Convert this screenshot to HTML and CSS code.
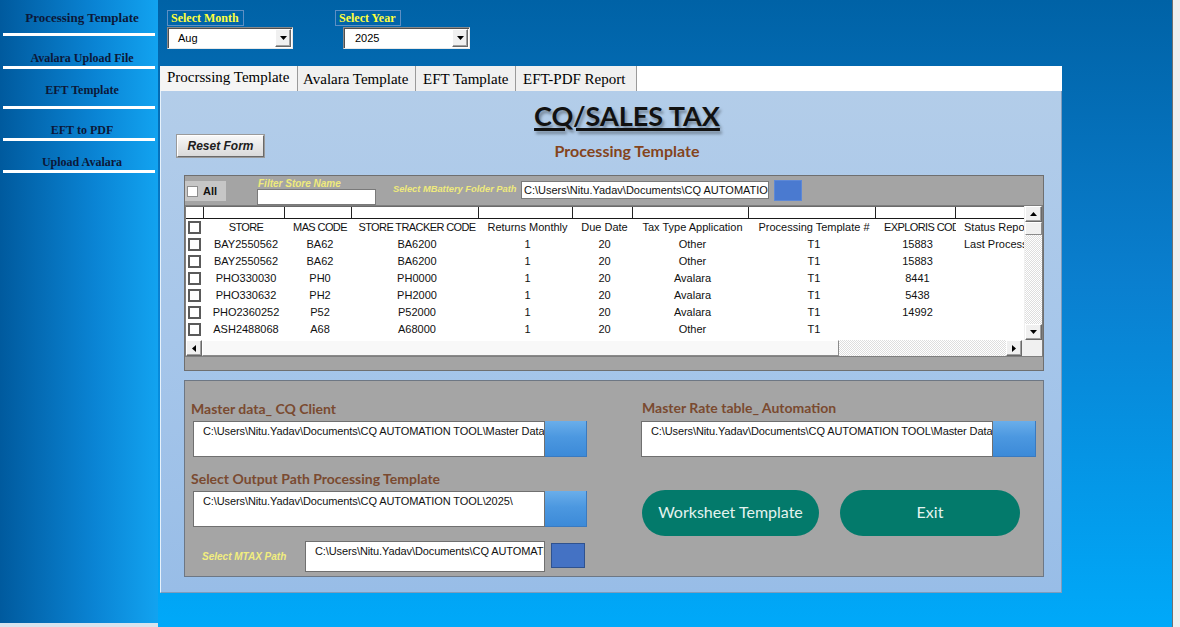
FILE: index.html
```html
<!DOCTYPE html>
<html lang="en">
<head>
<meta charset="utf-8">
<title>CQ/SALES TAX</title>
<link rel="stylesheet" href="styles.css">
</head>
<body>
<div class="app">
  <nav class="sidebar">
    <div class="nav-item nav-item-1">Processing Template</div>
    <div class="nav-item nav-item-2">Avalara Upload File</div>
    <div class="nav-item nav-item-3">EFT Template</div>
    <div class="nav-item nav-item-4">EFT to PDF</div>
    <div class="nav-item nav-item-5">Upload Avalara</div>
  </nav>
  <main class="main">
    <div class="topbar">
      <div class="picker picker-month">
        <div class="picker-label">Select Month</div>
        <div class="combo"><span class="combo-value">Aug</span><span class="combo-btn"><svg width="7" height="4" viewBox="0 0 7 4"><path d="M0 0h7L3.5 4z" fill="#000"/></svg></span></div>
      </div>
      <div class="picker picker-year">
        <div class="picker-label">Select Year</div>
        <div class="combo"><span class="combo-value">2025</span><span class="combo-btn"><svg width="7" height="4" viewBox="0 0 7 4"><path d="M0 0h7L3.5 4z" fill="#000"/></svg></span></div>
      </div>
    </div>
    <div class="tabs">
      <div class="tab tab-1 tab-active">Procrssing Template</div>
      <div class="tab tab-2">Avalara Template</div>
      <div class="tab tab-3">EFT Tamplate</div>
      <div class="tab tab-4">EFT-PDF Report</div>
    </div>
    <section class="panel">
      <header class="panel-head">
        <div class="reset-btn">Reset Form</div>
        <div class="title-block">
          <h1 class="title">CQ/SALES TAX</h1>
          <div class="subtitle">Processing Template</div>
        </div>
      </header>
      <div class="grid-panel">
        <div class="toolbar">
          <div class="all-box"><span class="chk-light"></span><span class="all-text">All</span></div>
          <div class="filter">
            <div class="ylabel filter-label">Filter Store Name</div>
            <div class="input-filter"></div>
          </div>
          <div class="ylabel mb-label">Select MBattery Folder Path</div>
          <div class="input-path">C:\Users\Nitu.Yadav\Documents\CQ AUTOMATION TOOL\</div>
          <div class="blue-btn"></div>
        </div>
        <div class="listview">
          <div class="lv-content">
            <div class="lv-head"><span></span><span></span><span></span><span></span><span></span><span></span><span></span><span></span><span></span><span class="last"></span></div>
            <div class="lv-row"><span class="c-chk"><i class="chk"></i></span><span class="caps">STORE</span><span class="caps">MAS CODE</span><span class="caps">STORE TRACKER CODE</span><span>Returns Monthly</span><span>Due Date</span><span>Tax Type Application</span><span>Processing Template #</span><span class="c-left caps">EXPLORIS CODE</span><span class="c-left">Status Report</span></div>
            <div class="lv-row"><span class="c-chk"><i class="chk"></i></span><span>BAY2550562</span><span>BA62</span><span>BA6200</span><span>1</span><span>20</span><span>Other</span><span>T1</span><span>15883</span><span class="c-left">Last Process</span></div>
            <div class="lv-row"><span class="c-chk"><i class="chk"></i></span><span>BAY2550562</span><span>BA62</span><span>BA6200</span><span>1</span><span>20</span><span>Other</span><span>T1</span><span>15883</span><span class="c-left"></span></div>
            <div class="lv-row"><span class="c-chk"><i class="chk"></i></span><span>PHO330030</span><span>PH0</span><span>PH0000</span><span>1</span><span>20</span><span>Avalara</span><span>T1</span><span>8441</span><span class="c-left"></span></div>
            <div class="lv-row"><span class="c-chk"><i class="chk"></i></span><span>PHO330632</span><span>PH2</span><span>PH2000</span><span>1</span><span>20</span><span>Avalara</span><span>T1</span><span>5438</span><span class="c-left"></span></div>
            <div class="lv-row"><span class="c-chk"><i class="chk"></i></span><span>PHO2360252</span><span>P52</span><span>P52000</span><span>1</span><span>20</span><span>Avalara</span><span>T1</span><span>14992</span><span class="c-left"></span></div>
            <div class="lv-row"><span class="c-chk"><i class="chk"></i></span><span>ASH2488068</span><span>A68</span><span>A68000</span><span>1</span><span>20</span><span>Other</span><span>T1</span><span></span><span class="c-left"></span></div>
          </div>
          <div class="vscroll">
            <div class="sb-btn"><svg width="7" height="4" viewBox="0 0 7 4"><path d="M0 4h7L3.5 0z" fill="#000"/></svg></div>
            <div class="sb-thumb-v"></div>
            <div class="sb-track"></div>
            <div class="sb-btn"><svg width="7" height="4" viewBox="0 0 7 4"><path d="M0 0h7L3.5 4z" fill="#000"/></svg></div>
          </div>
          <div class="hscroll">
            <div class="sb-btn"><svg width="4" height="7" viewBox="0 0 4 7"><path d="M4 0v7L0 3.5z" fill="#000"/></svg></div>
            <div class="sb-thumb-h"></div>
            <div class="sb-track"></div>
            <div class="sb-btn"><svg width="4" height="7" viewBox="0 0 4 7"><path d="M0 0v7L4 3.5z" fill="#000"/></svg></div>
          </div>
          <div class="corner"></div>
        </div>
      </div>
      <div class="lower-panel">
        <div class="col col-left">
          <div class="blabel">Master data_ CQ Client</div>
          <div class="path-row">
            <div class="pathbox">C:\Users\Nitu.Yadav\Documents\CQ AUTOMATION TOOL\Master Data\</div>
            <div class="browse-btn"></div>
          </div>
          <div class="blabel blabel-2">Select Output Path Processing Template</div>
          <div class="path-row">
            <div class="pathbox">C:\Users\Nitu.Yadav\Documents\CQ AUTOMATION TOOL\2025\</div>
            <div class="browse-btn"></div>
          </div>
          <div class="mtax-row">
            <div class="ylabel mtax-label">Select MTAX Path</div>
            <div class="mtax-box">C:\Users\Nitu.Yadav\Documents\CQ AUTOMATION TOOL\</div>
            <div class="mtax-btn"></div>
          </div>
        </div>
        <div class="col col-right">
          <div class="blabel">Master Rate table_ Automation</div>
          <div class="path-row">
            <div class="pathbox">C:\Users\Nitu.Yadav\Documents\CQ AUTOMATION TOOL\Master Data\</div>
            <div class="browse-btn"></div>
          </div>
          <div class="pill-row">
            <div class="pill pill-ws">Worksheet Template</div>
            <div class="pill pill-exit">Exit</div>
          </div>
        </div>
      </div>
    </section>
  </main>
  <div class="edge"></div>
</div>
</body>
</html>
```
FILE: styles.css
```css
* { box-sizing: border-box; }
html, body { margin: 0; padding: 0; }
body {
  width: 1180px;
  height: 627px;
  overflow: hidden;
  background: #0a7fd0;
  font-family: "Liberation Sans", Arial, sans-serif;
}
.app { display: flex; width: 1180px; height: 627px; }

/* Sidebar */
.sidebar {
  flex: 0 0 158px;
  height: 627px;
  padding: 0 3px;
  background: linear-gradient(to right, #005a9e 0%, #0a84d4 60%, #12a3f0 100%);
  border-bottom: 4px solid #d8e4ee;
}
.nav-item {
  font-family: "Liberation Serif", "Times New Roman", serif;
  font-weight: bold;
  font-size: 12px;
  line-height: 14px;
  color: #0c1838;
  text-align: center;
  padding-left: 6px;
  border-bottom: 3px solid #ffffff;
  white-space: nowrap;
}
.nav-item-1 { height: 36px; padding-top: 11px; font-size: 13px; }
.nav-item-2 { height: 33px; padding-top: 15px; }
.nav-item-3 { height: 40px; padding-top: 14px; }
.nav-item-4 { height: 32px; padding-top: 14px; }
.nav-item-5 { height: 32px; padding-top: 14px; }

/* Main */
.main {
  flex: 0 0 1014px;
  height: 627px;
  padding-left: 2px;
  background: linear-gradient(to bottom, #0062a6 0%, #0a7fcf 45%, #00a9f9 100%);
}
.edge { flex: 0 0 8px; background: #efefef; border-left: 1px solid #707070; }

.topbar { height: 66px; display: flex; padding: 10px 0 0 7px; }
.picker { display: flex; flex-direction: column; align-items: flex-start; }
.picker-label {
  font-family: "Liberation Serif", "Times New Roman", serif;
  font-weight: bold;
  font-size: 12px;
  line-height: 14px;
  height: 16px;
  color: #ffff3c;
  border: 1px solid #5d8fc4;
  padding: 0 4px 0 3px;
  white-space: nowrap;
}
.combo {
  margin-top: 1px;
  width: 126px;
  height: 22px;
  background: #ffffff;
  border: 1px solid;
  border-color: #8a8a8a #e8e8e8 #e8e8e8 #8a8a8a;
  box-shadow: inset 1px 1px 0 #505050;
  display: flex;
  align-items: center;
  justify-content: space-between;
}
.combo-value { font-size: 11px; padding-left: 10px; color: #000; }
.combo-btn {
  width: 16px;
  height: 18px;
  margin-right: 1px;
  background: #f0f0f0;
  border: 1px solid;
  border-color: #ffffff #696969 #696969 #ffffff;
  box-shadow: inset -1px -1px 0 #a0a0a0;
  display: flex;
  align-items: center;
  justify-content: center;
}
.picker-year { margin-left: 42px; }
.picker-year .combo { margin-left: 8px; width: 127px; }
.picker-year .combo-value { padding-left: 11px; }

/* Tabs */
.tabs { width: 902px; height: 25px; background: #ffffff; display: flex; }
.tab {
  font-family: "Liberation Serif", "Times New Roman", serif;
  font-size: 15px;
  line-height: 17px;
  color: #000;
  background: #f0f0f0;
  padding: 5px 0 0 5px;
  border-right: 1px solid #9a9a9a;
  box-shadow: 1px 0 0 #ffffff;
  white-space: nowrap;
  overflow: hidden;
}
.tab-active { padding-top: 3px; padding-left: 7px; background: #f5f5f5; }
.tab-1 { width: 138px; }
.tab-2 { width: 118px; }
.tab-3 { width: 100px; padding-left: 7px; }
.tab-4 { width: 121px; padding-left: 7px; }

/* Panel */
.panel {
  width: 902px;
  height: 502px;
  background: linear-gradient(to bottom, #b3cde9 0%, #a6c6ea 50%, #98bde7 100%);
  border-left: 1px solid #e6f1fb;
  border-right: 1px solid #7f9cbc;
  border-bottom: 1px solid #7f9cbc;
}
.panel-head { display: flex; height: 84px; padding-left: 16px; }
.reset-btn {
  margin-top: 44px;
  width: 87px;
  height: 22px;
  background: linear-gradient(to bottom, #f7f7f7, #dadada);
  border: 1px solid;
  border-color: #ffffff #6a6a6a #6a6a6a #ffffff;
  box-shadow: 0 0 0 1px #9a9a9a;
  font-style: italic;
  font-weight: bold;
  font-size: 12px;
  line-height: 20px;
  color: #1d1d1d;
  text-align: center;
}
.title-block { width: 726px; padding-top: 9px; text-align: center; }
.title {
  margin: 0;
  font-family: Lato, "Open Sans", sans-serif;
  font-weight: 700;
  font-size: 27px;
  line-height: 32px;
  color: #111111;
  text-decoration: underline;
  text-decoration-thickness: 3px;
  text-underline-offset: 2px;
  text-shadow: 2px 3px 3px rgba(0, 0, 0, 0.35);
}
.subtitle {
  margin-top: 10px;
  font-family: Lato, "Open Sans", sans-serif;
  font-weight: 700;
  font-size: 16px;
  line-height: 18px;
  color: #84441c;
}

/* Grid panel */
.grid-panel {
  margin-left: 23px;
  width: 860px;
  height: 196px;
  background: #a4a4a4;
  border: 1px solid #6f6f6f;
}
.toolbar { display: flex; align-items: flex-start; height: 29px; }
.all-box {
  margin-top: 5px;
  width: 41px;
  height: 20px;
  background: #c6c6c6;
  display: flex;
  align-items: center;
  padding-left: 2px;
}
.chk-light { width: 11px; height: 11px; background: #ffffff; border: 1px solid #8e8e8e; }
.all-text { margin-left: 5px; font-weight: bold; font-size: 11px; color: #111; }
.ylabel {
  font-style: italic;
  font-weight: bold;
  font-size: 10px;
  line-height: 11px;
  color: #efea7c;
  white-space: nowrap;
}
.filter { margin-left: 31px; margin-top: 2px; }
.filter-label { margin-left: 1px; }
.input-filter { width: 119px; height: 16px; background: #ffffff; border: 1px solid #7a7a7a; }
.mb-label { margin-left: 17px; margin-top: 8px; width: 125px; font-size: 9.3px; }
.input-path {
  margin-left: 3px;
  margin-top: 5px;
  width: 248px;
  height: 18px;
  background: #ffffff;
  border: 1px solid #7a7a7a;
  font-size: 11px;
  line-height: 16px;
  padding-left: 2px;
  color: #111;
  white-space: nowrap;
  overflow: hidden;
}
.blue-btn { margin-left: 5px; margin-top: 4px; width: 28px; height: 21px; background: #4a7ad0; border: 1px solid #5d88d6; }

/* List view */
.listview {
  width: 858px;
  height: 152px;
  background: #ffffff;
  border: 1px solid #7e7e7e;
  display: grid;
  grid-template-columns: 838px 18px;
  grid-template-rows: 134px 16px;
}
.lv-content { overflow: hidden; }
.lv-head, .lv-row {
  display: grid;
  grid-template-columns: 18px 81px 67px 127px 94px 60px 116px 127px 80px 90px;
  width: 860px;
}
.lv-head { height: 13px; border-top: 1px solid #6a6a6a; border-bottom: 1px solid #1a1a1a; }
.lv-head span { border-right: 1px solid #222222; }
.lv-head span.last { border-right: 0; }
.lv-row { height: 17px; font-size: 11px; line-height: 17px; color: #111; }
.lv-row span { text-align: center; padding-left: 3px; white-space: nowrap; overflow: hidden; }
.lv-row span.caps { letter-spacing: -0.6px; }
.lv-row span.c-left { text-align: left; padding-left: 8px; }
.lv-row span.c-chk { padding-left: 2px; padding-top: 2px; text-align: left; }
.chk { display: block; width: 13px; height: 13px; background: #ffffff; border: 2px solid #5a5a5a; }

.sb-btn {
  flex: 0 0 16px;
  width: 17px;
  height: 16px;
  background: #f0f0f0;
  border: 1px solid;
  border-color: #ffffff #696969 #696969 #ffffff;
  box-shadow: inset -1px -1px 0 #a0a0a0;
  display: flex;
  align-items: center;
  justify-content: center;
}
.sb-track {
  flex: 1;
  background-color: #ffffff;
  background-image: repeating-conic-gradient(#dedede 0% 25%, #ffffff 0% 50%);
  background-size: 2px 2px;
}
.vscroll { display: flex; flex-direction: column; border-left: 1px solid #f0f0f0; }
.sb-thumb-v {
  flex: 0 0 13px;
  background: #f0f0f0;
  border: 1px solid;
  border-color: #ffffff #8a8a8a #8a8a8a #ffffff;
}
.hscroll { display: flex; padding-right: 2px; background: #f0f0f0; }
.hscroll .sb-btn { width: 16px; }
.sb-thumb-h {
  flex: 0 0 637px;
  background: #f8f8f8;
  border: 1px solid;
  border-color: #ffffff #8a8a8a #8a8a8a #ffffff;
}
.corner { background: #f0f0f0; }

/* Lower panel */
.lower-panel {
  margin-left: 23px;
  margin-top: 9px;
  width: 860px;
  height: 197px;
  background: #a5a5a5;
  border: 1px solid #6d7784;
  display: flex;
  padding: 20px 0 0 6px;
}
.col { display: flex; flex-direction: column; }
.col-left { width: 396px; }
.col-right { width: 395px; margin-left: 54px; }
.blabel {
  font-family: Lato, "Open Sans", sans-serif;
  font-weight: 700;
  font-size: 14px;
  line-height: 16px;
  height: 16px;
  color: #7a4a30;
  white-space: nowrap;
}
.col-right .blabel { margin-left: 1px; margin-top: -1px; margin-bottom: 1px; }
.blabel-2 { margin-top: 14px; }
.path-row { display: flex; margin-top: 4px; margin-left: 2px; }
.col-right .path-row { margin-left: 0; }
.blabel-2 + .path-row { margin-top: 4px; }
.pathbox {
  width: 352px;
  height: 36px;
  background: #ffffff;
  border: 1px solid #707070;
  font-size: 11px;
  line-height: 13px;
  letter-spacing: -0.1px;
  padding: 3px 0 0 9px;
  color: #111;
  white-space: nowrap;
  overflow: hidden;
}
.browse-btn {
  width: 42px;
  height: 36px;
  background: linear-gradient(to bottom, #6aaeea 0%, #4c98e0 45%, #3c8ad8 100%);
  border-right: 1px solid #3a7ac0;
  border-bottom: 1px solid #3a7ac0;
}
.col-right .browse-btn { width: 43px; }
.mtax-row { display: flex; align-items: flex-start; margin-top: 14px; }
.mtax-label { margin-left: 11px; margin-top: 10px; width: 103px; line-height: 12px; color: #f2ee7e; }
.mtax-box {
  width: 240px;
  height: 31px;
  background: #ffffff;
  border: 1px solid #707070;
  font-size: 11px;
  line-height: 13px;
  letter-spacing: -0.1px;
  padding: 3px 0 0 9px;
  color: #111;
  white-space: nowrap;
  overflow: hidden;
}
.mtax-btn { margin-left: 6px; margin-top: 2px; width: 34px; height: 25px; background: #4472c4; border: 1px solid #2f528f; }
.pill-row { display: flex; margin-top: 33px; }
.pill {
  height: 46px;
  border-radius: 23px;
  background: #037a6b;
  color: #e3f3ef;
  font-family: Lato, "Open Sans", sans-serif;
  font-size: 16px;
  padding-bottom: 3px;
  display: flex;
  align-items: center;
  justify-content: center;
}
.pill-ws { width: 177px; margin-left: 1px; }
.pill-exit { width: 180px; margin-left: 21px; }
```
